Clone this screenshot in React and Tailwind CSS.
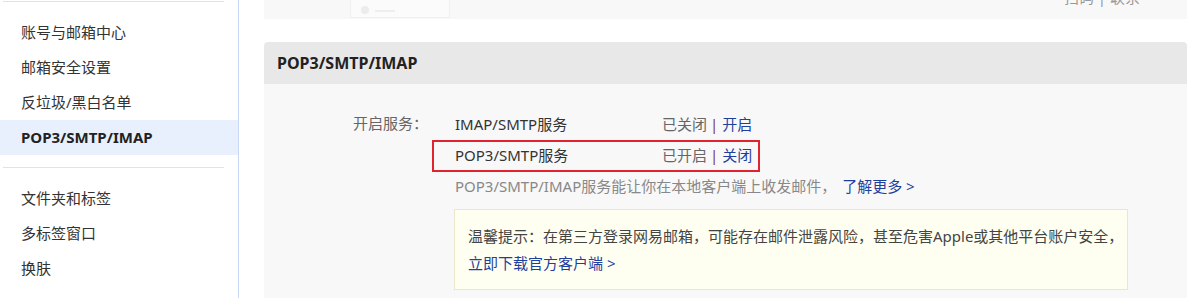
const font = { fontFamily: '"Noto Sans", "Noto Sans CJK SC", sans-serif' };

const menuTop = ["账号与邮箱中心", "邮箱安全设置", "反垃圾/黑白名单", "POP3/SMTP/IMAP"];
const menuBottom = ["文件夹和标签", "多标签窗口", "换肤"];

function MenuItem({ label, active }) {
  return (
    <div
      className={
        "flex h-[35px] items-center pl-[21px] text-[15px] " +
        (active ? "bg-[#e9f0fd] font-bold text-[#222]" : "text-[#333]")
      }
    >
      {label}
    </div>
  );
}

function ServiceRow({ name, status, action }) {
  return (
    <div className="flex h-[31px] items-center text-[15px]">
      <span className="w-[207px] text-[#333]">{name}</span>
      <span className="text-[#666]">{status}</span>
      <span className="ml-[3px] mr-[4px] text-[#7a3b4e]">|</span>
      <span className="text-[#1f3f9f]">{action}</span>
    </div>
  );
}

export default function App() {
  return (
    <div className="flex h-[298px] w-[1187px] overflow-hidden bg-white" style={font}>
      <aside className="w-[239px] shrink-0 border-r border-[#c9d8f6] bg-white">
        <div className="ml-[3px] mt-px h-px w-[221px] bg-[#e2e2e2]" />
        <div className="mt-[13px]">
          {menuTop.map((m) => (
            <MenuItem key={m} label={m} active={m === "POP3/SMTP/IMAP"} />
          ))}
        </div>
        <div className="ml-[3px] mt-[12px] h-px w-[221px] bg-[#e2e2e2]" />
        <div className="mt-[13px]">
          {menuBottom.map((m) => (
            <MenuItem key={m} label={m} />
          ))}
        </div>
      </aside>

      <main className="flex-1 pl-[25px]">
        <div className="flex h-[19px] items-start overflow-hidden bg-[#f8f8f8]">
          <div className="ml-[86px] flex h-[18px] w-[100px] items-end gap-[6px] border-x border-b border-[#f0f0f0] bg-[#fbfbfb] pb-[3px] pl-[10px]">
            <span className="h-[8px] w-[8px] rounded-full bg-[#ececec]" />
            <span className="mb-[2px] h-[2px] w-[20px] bg-[#eeeeee]" />
          </div>
          <span className="-mt-[14px] ml-auto mr-[47px] text-[15px] text-[#999]">扫码 | 联系</span>
        </div>

        <section className="mt-[23px]">
          <div className="flex h-[42px] items-center rounded-t-[4px] bg-[#e8e8e8] pl-[13px] text-[16px] font-bold text-[#222]">
            POP3/SMTP/IMAP
          </div>
          <div className="h-[230px] bg-[#f8f8f8] pl-[89px] pt-[25px]">
            <div className="flex">
              <div className="w-[102px] pt-[4px] text-[15px] leading-[20px] text-[#666]">开启服务：</div>
              <div className="flex-1">
                <ServiceRow name="IMAP/SMTP服务" status="已关闭" action="开启" />
                <div className="relative">
                  <ServiceRow name="POP3/SMTP服务" status="已开启" action="关闭" />
                  <div className="pointer-events-none absolute -left-[23px] top-0 h-[32px] w-[328px] border-2 border-[#e0232e]" />
                </div>
                <div className="flex h-[31px] items-center text-[15px]">
                  <span className="text-[#888]">POP3/SMTP/IMAP服务能让你在本地客户端上收发邮件，</span>
                  <span className="ml-[6px] text-[#1f3f9f]">了解更多 &gt;</span>
                </div>
              </div>
            </div>
            <div className="ml-[101px] mt-[7px] w-[674px] border border-[#ebe7cb] bg-[#fefff0] pb-[12px] pl-[13px] pt-[13px] text-[15px] leading-[27px]">
              <div className="text-[#444]">
                温馨提示：在第三方登录网易邮箱，可能存在邮件泄露风险，甚至危害Apple或其他平台账户安全，
              </div>
              <div className="text-[#1f3f9f]">立即下载官方客户端 &gt;</div>
            </div>
          </div>
        </section>
      </main>
    </div>
  );
}
